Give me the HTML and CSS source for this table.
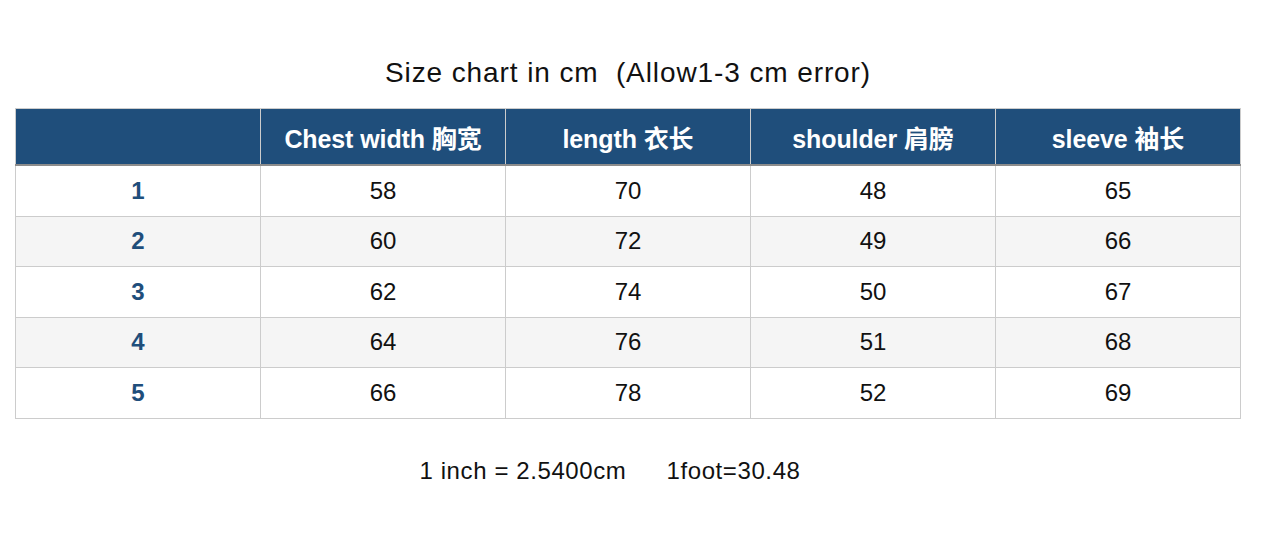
FILE: index.html
```html
<!DOCTYPE html>
<html>
<head>
<meta charset="utf-8">
<link rel="stylesheet" href="styles.css">
</head>
<body>
<div class="page">
  <h1 class="title">Size chart in cm&nbsp; (Allow1-3 cm error)</h1>
  <table class="chart">
    <thead>
      <tr>
        <th></th>
        <th>Chest width 胸宽</th>
        <th>length 衣长</th>
        <th>shoulder 肩膀</th>
        <th>sleeve 袖长</th>
      </tr>
    </thead>
    <tbody>
      <tr><td class="size">1</td><td>58</td><td>70</td><td>48</td><td>65</td></tr>
      <tr class="alt"><td class="size">2</td><td>60</td><td>72</td><td>49</td><td>66</td></tr>
      <tr><td class="size">3</td><td>62</td><td>74</td><td>50</td><td>67</td></tr>
      <tr class="alt"><td class="size">4</td><td>64</td><td>76</td><td>51</td><td>68</td></tr>
      <tr><td class="size">5</td><td>66</td><td>78</td><td>52</td><td>69</td></tr>
    </tbody>
  </table>
  <p class="note">1 inch = 2.5400cm<span class="gap"></span>1foot=30.48</p>
</div>
</body>
</html>
```
FILE: styles.css
```css
html, body {
  margin: 0;
  padding: 0;
  background: #ffffff;
}
body {
  font-family: "Liberation Sans", Arial, "Noto Sans CJK SC", sans-serif;
  color: #111;
}
.page {
  width: 1226px;
  padding-left: 15px;
}
.title {
  margin: 0;
  box-sizing: border-box;
  height: 108px;
  padding-top: 56px;
  font-size: 28px;
  letter-spacing: 0.9px;
  font-weight: normal;
  text-align: center;
  line-height: 34px;
  color: #111;
}
.chart {
  width: 1226px;
  border-collapse: collapse;
  table-layout: fixed;
}
.chart th,
.chart td {
  border: 1px solid #cccccc;
  text-align: center;
  padding: 0;
}
.chart thead th {
  background: #1f4e7b;
  color: #ffffff;
  font-weight: bold;
  font-size: 25px;
  letter-spacing: -0.1px;
  height: 55px;
  border-bottom: 2px solid #8c8c8c;
}
.chart tbody td {
  height: 49.5px;
  font-size: 24px;
  color: #111;
}
.chart tbody tr.alt td {
  background: #f5f5f5;
}
.chart td.size {
  color: #1f4e7b;
  font-weight: bold;
}
.note {
  margin: 0;
  padding-top: 38px;
  padding-right: 36px;
  text-align: center;
  font-size: 24px;
  letter-spacing: 0.6px;
  line-height: 28px;
  color: #111;
}
.gap {
  display: inline-block;
  width: 40px;
}
```
